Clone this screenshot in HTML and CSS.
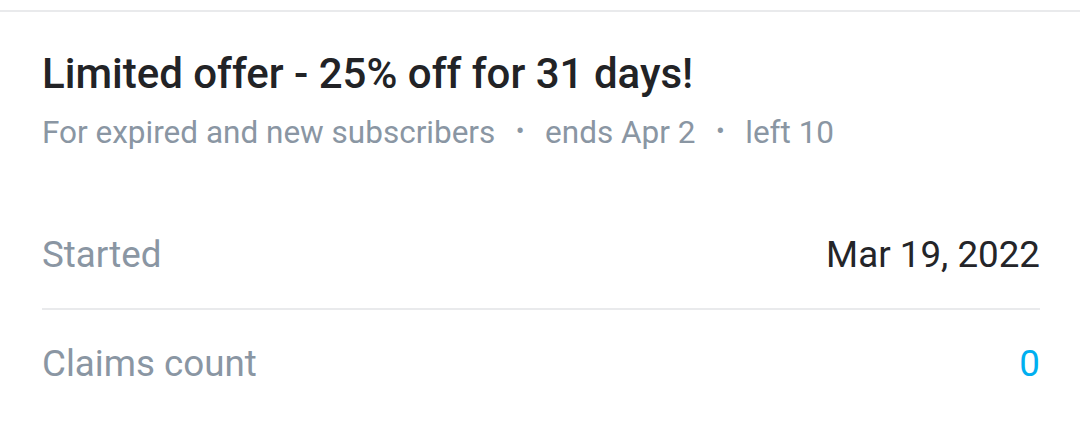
FILE: index.html
```html
<!DOCTYPE html>
<html>
<head>
<meta charset="utf-8">
<link rel="stylesheet" href="styles.css">
</head>
<body>
<div class="card">
  <div class="head">
    <div class="title">Limited offer - 25% off for 31 days!</div>
    <div class="sub">
      <span>For expired and new subscribers</span>
      <span class="dot">•</span>
      <span>ends Apr 2</span>
      <span class="dot">•</span>
      <span>left 10</span>
    </div>
  </div>
  <div class="rows">
    <div class="row">
      <span class="label">Started</span>
      <span class="value">Mar 19, 2022</span>
    </div>
    <div class="row">
      <span class="label">Claims count</span>
      <span class="value blue">0</span>
    </div>
  </div>
</div>
</body>
</html>
```
FILE: styles.css
```css
html, body {
  margin: 0;
  padding: 0;
  background: #fff;
}
body {
  font-family: Roboto, "Noto Sans", sans-serif;
  width: 1080px;
  height: 422px;
  overflow: hidden;
}
.card {
  margin-top: 10px;
  border-top: 2px solid #e9eaec;
  padding: 0 40px 0 42px;
}
.head {
  padding-top: 38px;
}
.title {
  font-size: 42px;
  font-weight: 500;
  color: #222326;
  line-height: 48px;
}
.sub {
  margin-top: 17px;
  font-size: 31.5px;
  color: #8a96a3;
  line-height: 36px;
  display: flex;
  align-items: center;
  gap: 20.5px;
}
.dot {
  font-size: 26px;
  position: relative;
  top: -2px;
}
.rows {
  margin-top: 50px;
}
.row {
  display: flex;
  justify-content: space-between;
  align-items: center;
  height: 107px;
  font-size: 36.75px;
}
.row + .row {
  border-top: 2px solid #e9eaec;
}
.label {
  color: #8a96a3;
}
.value {
  color: #242529;
}
.blue {
  color: #00aff0;
}
```
